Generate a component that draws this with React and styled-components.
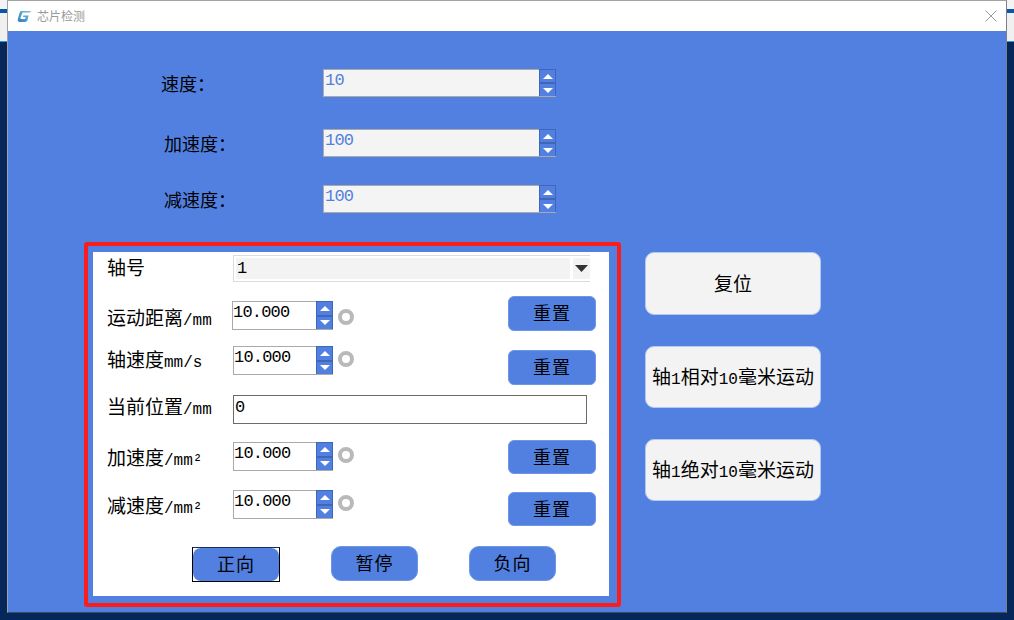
import React from "react";
import styled, { createGlobalStyle } from "styled-components";

const Global = createGlobalStyle`
  html, body { margin: 0; padding: 0; }
  body { font-family: "Noto Sans CJK SC", "Liberation Sans", sans-serif; color: #000; }
`;

const Desktop = styled.div`
  width: 1014px; height: 620px; box-sizing: border-box; padding-left: 7px; overflow: hidden;
  background: linear-gradient(to bottom, #f4f4f4 0 9px, #0a55a8 9px 13px, #f0f0f0 13px 41px, #2a98e0 41px 42px, #05275a 42px);
`;
const Win = styled.div`
  width: 1000px; height: 613px; box-sizing: border-box; display: flex; flex-direction: column;
  border: 1px solid #a2a2a2; border-bottom-color: #3d4a60; border-right-color: #7a7f88; background: #5280e0;
`;
const TitleBar = styled.div`
  height: 30px; flex: none; background: #fff; display: flex; align-items: center; padding: 0 9px 0 9px;
`;
const Logo = styled.svg` width: 14px; height: 12px; `;
const Title = styled.span` font-size: 12px; color: #9a9a9a; margin-left: 6px; line-height: 30px; `;
const Close = styled.svg` width: 12px; height: 12px; margin-left: auto; `;

const Body = styled.div` flex: 1; display: flex; flex-direction: column; padding-top: 38px; `;
const FormRow = styled.div`
  display: grid; grid-template-columns: 315px 233px; height: 28px; margin-top: ${p => p.$mt || 0}px;
`;
const FormLabel = styled.div`
  padding-left: ${p => p.$indent}px; font-size: 18px; line-height: 29px;
`;
const Lower = styled.div` display: flex; margin-top: 29px; padding-left: 76px; `;
const RedPanel = styled.div`
  width: 537px; height: 365px; box-sizing: border-box; border: 4px solid #fb1d1d; border-radius: 3px;
  padding: 6px 8px 7px 5px;
`;
const White = styled.div`
  height: 100%; background: #fff; padding: 3px 13px 0 14px; box-sizing: border-box; display: flex; flex-direction: column;
`;
const Row = styled.div`
  display: flex; align-items: flex-start; margin-top: ${p => p.$mt || 0}px;
`;
const Label = styled.div`
  width: 126px; flex: none; height: 20px; line-height: 17px; font-size: 19px; white-space: nowrap; margin-top: ${p => p.$mt}px;
`;
const L = styled.span`
  font-family: "Liberation Mono", monospace; font-size: 16px;
`;
const Spin = styled.div`
  display: flex; width: ${p => p.$w}px; height: ${p => p.$h}px; flex: none;
  margin-top: ${p => p.$mt || 0}px; margin-left: ${p => p.$ml || 0}px;
`;
const SpinValue = styled.div`
  flex: 1; box-sizing: border-box; border: 1px solid #aaa; border-right: 0; padding-left: ${p => p.$pl}px;
  background: ${p => p.$bg}; color: ${p => p.$color}; font-family: "Liberation Mono", monospace;
  font-size: 17px; letter-spacing: -0.8px; line-height: 21px;
`;
const SpinButtons = styled.div`
  width: 17px; flex: none; display: flex; flex-direction: column; background: #3f66b8;
  border-bottom: 1px solid #aaa; box-sizing: border-box;
`;
const SpinBtn = styled.div`
  flex: 1; background: #5280e0; display: flex; align-items: center; justify-content: center;
  border: 1px solid #3f66b8; border-width: ${p => p.$up ? "1px 1px 1px 1px" : "1px 1px 0 1px"};
`;
const Tri = styled.svg` width: 10px; height: 5px; display: block; `;
const Ring = styled.div`
  width: 16px; height: 16px; box-sizing: border-box; border: 4px solid #b9b9b9; border-radius: 50%;
  flex: none; margin-left: 5px; margin-top: ${p => p.$mt}px;
`;
const Combo = styled.div`
  width: 357px; height: 27px; box-sizing: border-box; flex: none; display: flex; padding: 2px 0 2px 2px;
  border: 1px solid #dcdcdc; border-right: 0; background: #fff;
`;
const ComboText = styled.div`
  flex: 1; background: #f3f3f3; font-family: "Liberation Mono", monospace; font-size: 17px; line-height: 21px; padding-left: 1px;
`;
const ComboArrow = styled.div`
  width: 17px; margin-left: 3px; background: #f3f3f3; display: flex; align-items: center; justify-content: center;
`;
const TextBox = styled.div`
  width: 354px; height: 29px; box-sizing: border-box; flex: none; border: 1px solid #6a6a6a; padding-left: 1px;
  font-family: "Liberation Mono", monospace; font-size: 17px; line-height: 23px;
`;
const BlueBtn = styled.div`
  width: ${p => p.$w || 88}px; height: ${p => p.$h || 35}px; box-sizing: border-box; flex: none;
  background: #5280e0; border: 1px solid #6f96e6; border-radius: ${p => p.$r || 6}px;
  display: flex; align-items: center; justify-content: center; font-size: 18px; letter-spacing: 1px;
  padding-bottom: 3px; margin-left: ${p => p.$ml || 0}px;
`;
const ResetSlot = styled.div` margin-left: auto; margin-top: ${p => p.$mt || 0}px; `;
const FocusFrame = styled.div`
  width: 88px; height: 35px; box-sizing: border-box; flex: none; border: 1px solid #000; border-top-color: #1c2f5c; background: #fff;
  margin-left: 85px; margin-top: 1px;
`;
const FocusFill = styled.div`
  width: 100%; height: 100%; background: #5280e0; border-radius: 8px; padding-bottom: 3px; box-sizing: border-box;
  display: flex; align-items: center; justify-content: center; font-size: 18px; letter-spacing: 1px;
`;
const SideCol = styled.div` display: flex; flex-direction: column; margin-left: 24px; padding-top: 10px; `;
const SideBtn = styled.div`
  width: 176px; height: ${p => p.$h}px; box-sizing: border-box; margin-top: ${p => p.$mt || 0}px;
  background: #f3f3f3; border: 1px solid #b4c8f0; border-radius: 9px; padding-bottom: 3px;
  display: flex; align-items: center; justify-content: center; font-size: 19px; white-space: nowrap;
`;

const Up = () => <Tri viewBox="0 0 10 5"><path d="M5 0 10 5H0z" fill="#fff" /></Tri>;
const Down = () => <Tri viewBox="0 0 10 5"><path d="M0 0h10L5 5z" fill="#fff" /></Tri>;

const SpinBox = ({ value, w = 101, h = 29, mt, ml, bg = "#fff", color = "#000", pl = 0 }) => (
  <Spin $w={w} $h={h} $mt={mt} $ml={ml}>
    <SpinValue $bg={bg} $color={color} $pl={pl}>{value}</SpinValue>
    <SpinButtons>
      <SpinBtn $up><Up /></SpinBtn>
      <SpinBtn><Down /></SpinBtn>
    </SpinButtons>
  </Spin>
);

export default function App() {
  return (
    <Desktop>
      <Global />
      <Win>
        <TitleBar>
          <Logo viewBox="0 0 14 12">
            <defs>
              <linearGradient id="lg" x1="0" y1="1" x2="1" y2="0">
                <stop offset="0" stopColor="#2a7fc0" />
                <stop offset="1" stopColor="#7cc4d8" />
              </linearGradient>
            </defs>
            <path d="M4 1h10l-1 1.500H5.500L3.500 7.500c-.3 1 .3 1.500 1 1.500h3.500l.8-2H6l.6-1.500h5L10.500 10c-.4 1.200-1.200 2-2.500 2H3C1 12 .3 10.500 1 8.500L2.500 3C3 1.700 3.200 1 4 1z" fill="url(#lg)" />
          </Logo>
          <Title>芯片检测</Title>
          <Close viewBox="0 0 12 12">
            <path d="M.5.5l11 11M11.500.5l-11 11" stroke="#9a9a9a" strokeWidth="1" fill="none" />
          </Close>
        </TitleBar>
        <Body>
          <FormRow>
            <FormLabel $indent={153}>速度：</FormLabel>
            <SpinBox value="10" w={233} h={28} bg="#f4f4f4" color="#5280e0" pl={1} />
          </FormRow>
          <FormRow $mt={32}>
            <FormLabel $indent={156}>加速度：</FormLabel>
            <SpinBox value="100" w={233} h={28} bg="#f4f4f4" color="#5280e0" pl={1} />
          </FormRow>
          <FormRow $mt={28}>
            <FormLabel $indent={156}>减速度：</FormLabel>
            <SpinBox value="100" w={233} h={28} bg="#f4f4f4" color="#5280e0" pl={1} />
          </FormRow>
          <Lower>
            <RedPanel>
              <White>
                <Row>
                  <Label $mt={3}>轴号</Label>
                  <Combo>
                    <ComboText>1</ComboText>
                    <ComboArrow>
                      <svg width="13" height="7" viewBox="0 0 13 7"><path d="M0 0h13L6.500 7z" fill="#333" /></svg>
                    </ComboArrow>
                  </Combo>
                </Row>
                <Row $mt={14}>
                  <Label $mt={12}>运动距离<L>/mm</L></Label>
                  <SpinBox value="10.000" mt={5} ml={-1} />
                  <Ring $mt={13} />
                  <ResetSlot><BlueBtn>重置</BlueBtn></ResetSlot>
                </Row>
                <Row $mt={15}>
                  <Label $mt={4}>轴速度<L>mm/s</L></Label>
                  <SpinBox value="10.000" w={100} />
                  <Ring $mt={5} />
                  <ResetSlot $mt={4}><BlueBtn>重置</BlueBtn></ResetSlot>
                </Row>
                <Row $mt={10}>
                  <Label $mt={2}>当前位置<L>/mm</L></Label>
                  <TextBox>0</TextBox>
                </Row>
                <Row $mt={16}>
                  <Label $mt={8}>加速度<L>/mm²</L></Label>
                  <SpinBox value="10.000" w={100} mt={2} />
                  <Ring $mt={7} />
                  <ResetSlot><BlueBtn $h={34}>重置</BlueBtn></ResetSlot>
                </Row>
                <Row $mt={16}>
                  <Label $mt={6}>减速度<L>/mm²</L></Label>
                  <SpinBox value="10.000" w={100} />
                  <Ring $mt={5} />
                  <ResetSlot $mt={2}><BlueBtn $h={34}>重置</BlueBtn></ResetSlot>
                </Row>
                <Row $mt={20}>
                  <FocusFrame><FocusFill>正向</FocusFill></FocusFrame>
                  <BlueBtn $w={87} $r={10} $ml={51}>暂停</BlueBtn>
                  <BlueBtn $w={87} $r={10} $ml={51}>负向</BlueBtn>
                </Row>
              </White>
            </RedPanel>
            <SideCol>
              <SideBtn $h={63}>复位</SideBtn>
              <SideBtn $h={62} $mt={31}><span>轴<L>1</L>相对<L>10</L>毫米运动</span></SideBtn>
              <SideBtn $h={62} $mt={31}><span>轴<L>1</L>绝对<L>10</L>毫米运动</span></SideBtn>
            </SideCol>
          </Lower>
        </Body>
      </Win>
    </Desktop>
  );
}
